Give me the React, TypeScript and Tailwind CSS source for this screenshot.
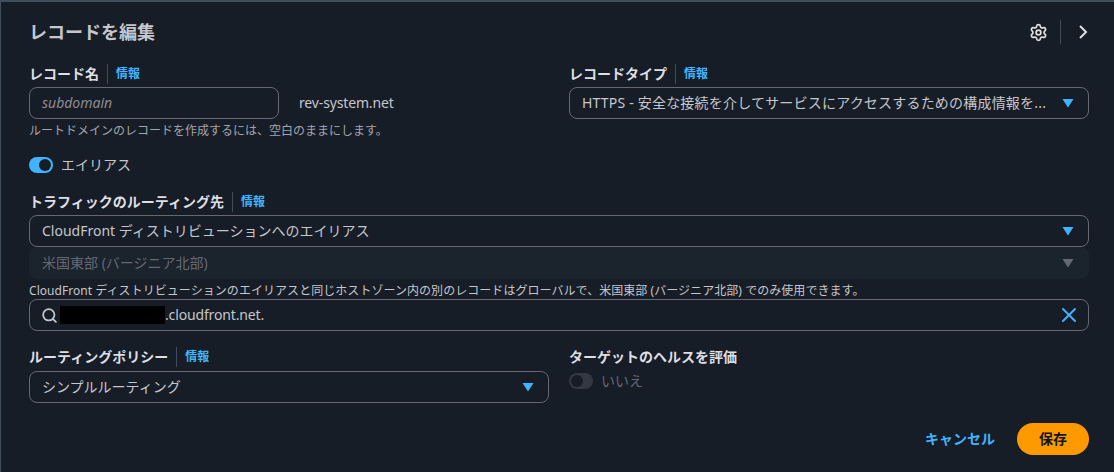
import { Search, Settings, X } from "lucide-react";

const font = { fontFamily: '"Noto Sans", "Noto Sans CJK JP", sans-serif' };

function Label({ text, info = true }: { text: string; info?: boolean }) {
  return (
    <div className="flex items-center h-5 text-sm leading-5 font-bold text-[#dedee3]">
      <span>{text}</span>
      {info && (
        <>
          <span className="w-px h-5 mx-2 bg-[#414d5c]" />
          <span className="text-xs font-bold text-[#42b4ff]">情報</span>
        </>
      )}
    </div>
  );
}

function Caret({ disabled = false }: { disabled?: boolean }) {
  return (
    <svg width="12" height="10" viewBox="0 0 12 10" className="shrink-0">
      <path d="M0.5 1h11L6 9.5z" fill={disabled ? "#656871" : "#42b4ff"} />
    </svg>
  );
}

function SelectBox({ text, wide = false }: { text: string; wide?: boolean }) {
  return (
    <div className="flex items-center justify-between h-8 pl-3 pr-[14px] border border-[#656871] rounded-lg text-sm text-[#c6c6cd]">
      <span className={wide ? "truncate tracking-[0.2px]" : "truncate"}>{text}</span>
      <Caret />
    </div>
  );
}

export default function App() {
  return (
    <div
      className="w-[1114px] h-[472px] overflow-hidden bg-[#161d26] border-t-2 border-l border-[#414d5c] pl-7 pr-[25px]"
      style={font}
    >
      <div className="flex items-center justify-between h-[62px] pb-[2px]">
        <h2 className="text-lg font-bold text-[#c6c6cd]">レコードを編集</h2>
        <div className="flex items-center text-[#dedee3]">
          <Settings size={19} strokeWidth={2.2} />
          <span className="w-px h-6 ml-3 mr-[14px] bg-[#414d5c]" />
          <svg width="16" height="16" viewBox="0 0 16 16" fill="none" className="-mr-[2px]">
            <path d="M5 2l6 6-6 6" stroke="currentColor" strokeWidth="2" />
          </svg>
        </div>
      </div>

      <div className="grid grid-cols-[520px_520px] gap-x-5">
        <div>
          <Label text="レコード名" />
          <div className="flex items-center mt-[3px]">
            <div className="flex items-center w-[250px] h-8 px-3 border border-[#656871] rounded-lg text-sm italic text-[#8c8c94]">
              subdomain
            </div>
            <span className="ml-5 text-sm tracking-[-0.15px] text-[#c6c6cd]">rev-system.net</span>
          </div>
          <p className="mt-[2px] text-xs leading-5 text-[#a4a4ad]">
            ルートドメインのレコードを作成するには、空白のままにします。
          </p>
        </div>
        <div>
          <Label text="レコードタイプ" />
          <div className="mt-[3px]">
            <SelectBox wide text="HTTPS - 安全な接続を介してサービスにアクセスするための構成情報を..." />
          </div>
        </div>
      </div>

      <div className="flex items-center mt-4 h-4">
        <span className="flex items-center justify-end w-6 h-4 pr-[2px] rounded-full bg-[#42b4ff]">
          <span className="w-3 h-3 rounded-full bg-[#161d26]" />
        </span>
        <span className="ml-2 text-sm text-[#c6c6cd]">エイリアス</span>
      </div>

      <div className="mt-[19px]">
        <Label text="トラフィックのルーティング先" />
        <div className="mt-[3px] w-[1060px]">
          <SelectBox text="CloudFront ディストリビューションへのエイリアス" />
          <div className="flex items-center justify-between h-8 pl-[13px] pr-[15px] rounded-lg bg-[#1b232d] text-sm text-[#656871]">
            <span>米国東部 (バージニア北部)</span>
            <Caret disabled />
          </div>
          <p className="h-5 pt-[2px] text-xs tracking-[0.05px] leading-5 text-[#c6c6cd]">
            CloudFront ディストリビューションのエイリアスと同じホストゾーン内の別のレコードはグローバルで、米国東部 (バージニア北部) でのみ使用できます。
          </p>
          <div className="flex items-center h-8 pl-[11px] pr-[7px] border border-[#656871] rounded-lg text-sm tracking-[-0.15px] text-[#c6c6cd]">
            <Search size={17} strokeWidth={2.5} className="shrink-0 text-[#c6c6cd]" />
            <span className="w-[105px] h-[18px] ml-[2px] bg-black" />
            <span className="flex-1">.cloudfront.net.</span>
            <X size={24} strokeWidth={2} className="text-[#42b4ff]" />
          </div>
        </div>
      </div>

      <div className="grid grid-cols-[520px_520px] gap-x-5 mt-4">
        <div>
          <Label text="ルーティングポリシー" />
          <div className="mt-[4px]">
            <SelectBox text="シンプルルーティング" />
          </div>
        </div>
        <div>
          <Label text="ターゲットのヘルスを評価" info={false} />
          <div className="flex items-center mt-[6px] h-4">
            <span className="flex items-center w-6 h-4 pl-[2px] rounded-full bg-[#333843]">
              <span className="w-3 h-3 rounded-full bg-[#161d26]" />
            </span>
            <span className="ml-2 text-sm text-[#656871]">いいえ</span>
          </div>
        </div>
      </div>

      <div className="flex items-center justify-end w-[1060px] mt-5">
        <span className="text-sm font-bold text-[#42b4ff]">キャンセル</span>
        <button className="w-[72px] h-8 ml-[22px] rounded-full bg-[#ff9900] text-sm font-bold text-[#0f141a]">
          保存
        </button>
      </div>
    </div>
  );
}
